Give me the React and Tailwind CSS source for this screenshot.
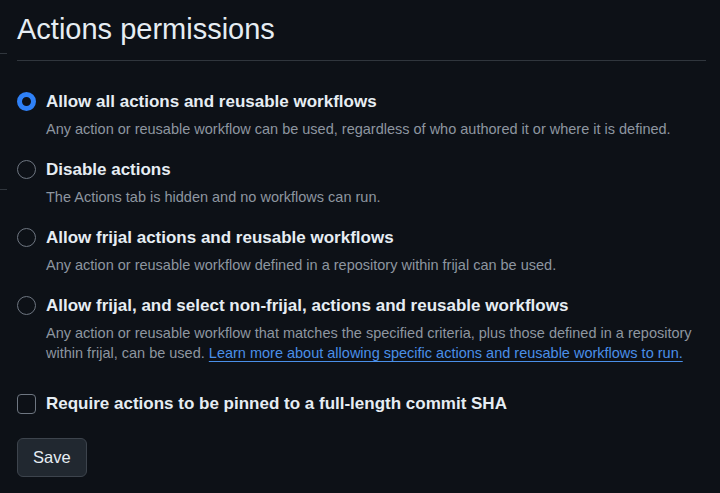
const options = [
  {
    label: "Allow all actions and reusable workflows",
    desc: "Any action or reusable workflow can be used, regardless of who authored it or where it is defined.",
    checked: true,
  },
  {
    label: "Disable actions",
    desc: "The Actions tab is hidden and no workflows can run.",
  },
  {
    label: "Allow frijal actions and reusable workflows",
    desc: "Any action or reusable workflow defined in a repository within frijal can be used.",
  },
  {
    label: "Allow frijal, and select non-frijal, actions and reusable workflows",
    desc: "Any action or reusable workflow that matches the specified criteria, plus those defined in a repository within frijal, can be used.",
    link: "Learn more about allowing specific actions and reusable workflows to run.",
  },
];

function Radio({ checked }) {
  if (checked) {
    return <span className="mt-px h-[19px] w-[19px] shrink-0 rounded-full border-[5px] border-[#2f81f7] bg-[#0d1117]" />;
  }
  return <span className="mt-px h-[19px] w-[19px] shrink-0 rounded-full border border-[#6e7681] bg-[#0d1117]" />;
}

export default function App() {
  return (
    <div className="relative min-h-screen w-full bg-[#0d1117] font-['Liberation_Sans',Arial,sans-serif] text-[#e6edf3]">
      <span className="absolute left-0 top-[53px] h-px w-[7px] bg-[#30363d]" />
      <span className="absolute left-0 top-[189px] h-px w-[7px] bg-[#30363d]" />

      <div className="pl-[17px] pr-[14px]">
        <h2 className="border-b border-[#30363d] pb-[12px] pt-[11px] text-[29px] leading-[37px] font-normal">
          Actions permissions
        </h2>

        <div className="mt-[30px] flex flex-col gap-[20px]">
          {options.map((o) => (
            <div key={o.label} className="flex gap-[10px]">
              <Radio checked={o.checked} />
              <div className="flex flex-col">
                <span className="text-[17px] leading-[22px] font-bold">{o.label}</span>
                <p className="mt-[6px] text-[14.5px] leading-[20px] text-[#8d96a0]">
                  {o.desc}
                  {o.link && (
                    <>
                      {" "}
                      <a className="text-[#4a8fe8] underline underline-offset-[3px]" href="#">
                        {o.link}
                      </a>
                    </>
                  )}
                </p>
              </div>
            </div>
          ))}
        </div>

        <label className="mt-[30px] flex items-center gap-[10px]">
          <span className="h-[20px] w-[19px] shrink-0 rounded-[4px] border border-[#6e7681] bg-[#0d1117]" />
          <span className="text-[17px] leading-[22px] font-bold">Require actions to be pinned to a full-length commit SHA</span>
        </label>

        <button className="mt-[23px] h-[39px] rounded-[6px] border border-[#3d444d] bg-[#212830] px-[15px] text-[16.5px] text-[#e6edf3]">
          Save
        </button>
      </div>
    </div>
  );
}
